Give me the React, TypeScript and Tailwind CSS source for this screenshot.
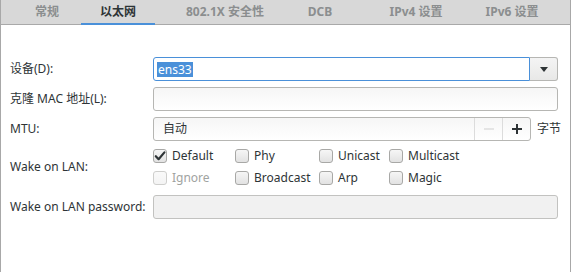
import React from 'react';

const tabs = [
  { label: '常规', w: 'w-[68px] ml-[12px]' },
  { label: '以太网', w: 'w-[74px]', active: true },
  { label: '802.1X 安全性', w: 'w-[140px]' },
  { label: 'DCB', w: 'w-[50px]' },
  { label: 'IPv4 设置', w: 'w-[142px]' },
  { label: 'IPv6 设置', w: 'w-[50px]' },
];

function Check({ label, checked, disabled, w }: { label: string; checked?: boolean; disabled?: boolean; w: string }) {
  return (
    <div className={`flex items-center gap-[5px] ${w}`}>
      <span
        className={`flex h-[14px] w-[14px] items-center justify-center rounded-[3px] border bg-gradient-to-b ${
          disabled ? 'border-[#cfcfcd] from-[#fafafa] to-[#f4f4f4]' : 'border-[#a8a8a6] from-[#f6f6f6] to-[#e2e2e2]'
        }`}
      >
        {checked && (
          <svg width="12" height="12" viewBox="0 0 12 12">
            <path d="M1.8 6.2 L4.6 9.2 L10.4 2.4" fill="none" stroke="#2e3436" strokeWidth="2.2" strokeLinecap="round" strokeLinejoin="round" />
          </svg>
        )}
      </span>
      <span className={disabled ? 'text-[#a1a3a1]' : 'text-[#2e3436]'}>{label}</span>
    </div>
  );
}

export default function App() {
  return (
    <div
      className="relative h-[272px] w-[575px] overflow-hidden bg-white text-[12px] text-[#2e3436]"
      style={{ fontFamily: '"Noto Sans", "Noto Sans CJK SC", sans-serif' }}
    >
      <div className="flex h-full w-[571px] flex-col border-r border-[#a8a8a8] border-l">
        {/* Tabs */}
        <div className="relative flex h-[25px] shrink-0 border-b border-[#a9a9a9] bg-[#d8d8d8]">
          {tabs.map((t) => (
            <div
              key={t.label}
              className={`relative flex items-center justify-center whitespace-nowrap font-bold ${t.w} ${
                t.active ? 'text-[#2e3436]' : 'text-[#8b8e8f]'
              }`}
            >
              {t.label}
              {t.active && <span className="absolute bottom-[-1px] left-0 h-[2px] w-full bg-[#4a90d9]" />}
            </div>
          ))}
        </div>

        {/* Body */}
        <div className="flex flex-col pl-[9px] pt-[32px]">
          <div className="flex h-[24px] items-center">
            <span className="w-[143px]">设备(D):</span>
            <div className="flex h-[24px] w-[405px]">
              <div className="flex flex-1 items-center rounded-l-[3px] border border-[#4a90d9] bg-white pl-[3px]">
                <span className="bg-[#4a90d9] px-[1px] leading-[15px] text-white">ens33</span>
              </div>
              <div className="flex w-[28px] items-center justify-center rounded-r-[3px] border border-l-0 border-[#b6b6b3] bg-gradient-to-b from-[#f4f4f4] to-[#e8e8e7]">
                <svg width="8" height="5" viewBox="0 0 8 5">
                  <path d="M0 0 H8 L4 5 Z" fill="#2e3436" />
                </svg>
              </div>
            </div>
          </div>

          <div className="mt-[6px] flex h-[24px] items-center">
            <span className="w-[143px]">克隆 MAC 地址(L):</span>
            <div className="h-[24px] w-[405px] rounded-[3px] border border-[#b6b6b3] bg-gradient-to-b from-[#f6f6f6] to-white" />
          </div>

          <div className="mt-[6px] flex h-[24px] items-center">
            <span className="w-[143px]">MTU:</span>
            <div className="flex h-[24px] w-[378px] rounded-[3px] border border-[#b6b6b3] bg-gradient-to-b from-[#f6f6f6] to-white">
              <div className="flex flex-1 items-center pl-[9px]">自动</div>
              <div className="flex w-[28px] items-center justify-center border-l border-[#dcdcdc] text-[#c8c8c8]">
                <svg width="10" height="10" viewBox="0 0 10 10">
                  <path d="M0 5 H10" stroke="#cfcfcf" strokeWidth="1" />
                </svg>
              </div>
              <div className="flex w-[28px] items-center justify-center border-l border-[#dcdcdc]">
                <svg width="10" height="10" viewBox="0 0 10 10">
                  <path d="M0 5 H10 M5 0 V10" stroke="#2e3436" strokeWidth="2" />
                </svg>
              </div>
            </div>
            <span className="ml-[6px]">字节</span>
          </div>

          <div className="mt-[8px] flex items-center">
            <span className="w-[143px]">Wake on LAN:</span>
            <div className="flex flex-col gap-[8px]">
              <div className="flex h-[14px]">
                <Check w="w-[82px]" label="Default" checked />
                <Check w="w-[84px]" label="Phy" />
                <Check w="w-[70px]" label="Unicast" />
                <Check w="w-[80px]" label="Multicast" />
              </div>
              <div className="flex h-[14px]">
                <Check w="w-[82px]" label="Ignore" disabled />
                <Check w="w-[84px]" label="Broadcast" />
                <Check w="w-[70px]" label="Arp" />
                <Check w="w-[80px]" label="Magic" />
              </div>
            </div>
          </div>

          <div className="mt-[10px] flex h-[24px] items-center">
            <span className="w-[143px]">Wake on LAN password:</span>
            <div className="h-[24px] w-[405px] rounded-[3px] border border-[#c2c2c0] bg-[#f1f1f1]" />
          </div>
        </div>
      </div>
    </div>
  );
}
